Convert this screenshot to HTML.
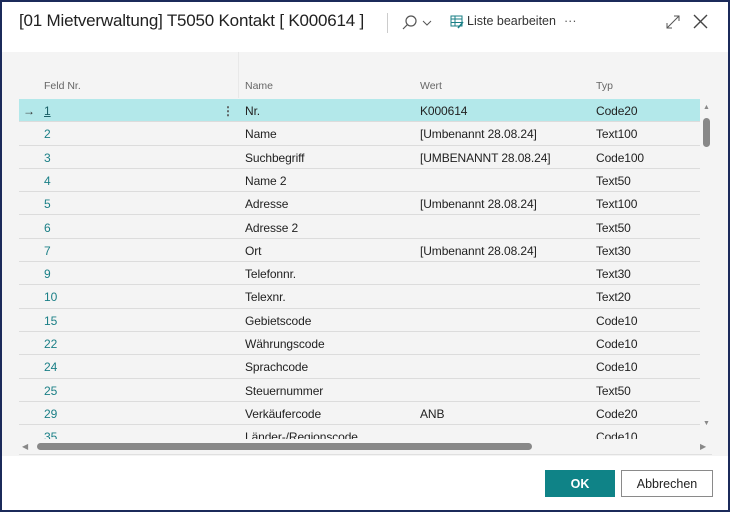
<!DOCTYPE html>
<html><head><meta charset="utf-8"><style>
*{margin:0;padding:0;box-sizing:border-box}
body{width:730px;height:512px;overflow:hidden;font-family:"Liberation Sans",sans-serif;background:#fff;position:relative}
.frame{position:absolute;left:0;top:0;width:730px;height:512px;border:2px solid #1b2a5a}
.title{position:absolute;left:19px;top:11px;font-size:17px;color:#212121;letter-spacing:-0.2px}
.sep{position:absolute;left:387px;top:13px;width:1px;height:20px;background:#ccc}
.tb{position:absolute;top:14px;font-size:12.5px;color:#333}
.panel{position:absolute;left:2px;top:52px;width:726px;height:404px;background:#f4f4f4}
.hdr{position:absolute;top:80px;font-size:10.5px;color:#666}
.row{position:absolute;left:19px;width:681px;height:23.3px;border-bottom:1px solid #dcdcdc;font-size:12px;color:#222;letter-spacing:-0.1px}
.row span{position:absolute;top:5px}
.sel{background:#b3e8ea}
.n{color:#1a7f86}
.btn{position:absolute;top:470px;height:27px;font-size:12.5px;display:flex;align-items:center;justify-content:center}
</style></head><body>
<div class="title">[01 Mietverwaltung] T5050 Kontakt [ K000614 ]</div>
<div class="sep"></div>
<svg style="position:absolute;left:401px;top:14px" width="34" height="18"><circle cx="10" cy="7" r="5" fill="none" stroke="#555" stroke-width="1.2"/><line x1="6.5" y1="10.5" x2="2" y2="15" stroke="#555" stroke-width="1.2"/><polyline points="22,7 26,11 30,7" fill="none" stroke="#555" stroke-width="1"/></svg>
<svg style="position:absolute;left:450px;top:15px" width="14" height="14"><rect x="1" y="1" width="11" height="10" fill="none" stroke="#1a7f86"/><line x1="1" y1="4" x2="12" y2="4" stroke="#1a7f86"/><line x1="1" y1="7.5" x2="12" y2="7.5" stroke="#1a7f86"/><line x1="5" y1="1" x2="5" y2="11" stroke="#1a7f86"/><line x1="8" y1="13" x2="13" y2="7" stroke="#1a7f86" stroke-width="1.5"/></svg>
<div class="tb" style="left:467px">Liste bearbeiten</div>
<div class="tb" style="left:564px;color:#555">···</div>
<svg style="position:absolute;left:665px;top:13px" width="44" height="18"><path d="M2 15 L14 3 M9 3 H14 V8 M2 10 V15 H7" fill="none" stroke="#555" stroke-width="1"/><path d="M29 2 L42 15 M42 2 L29 15" stroke="#444" stroke-width="1.4"/></svg>
<div class="panel"></div>
<div style="position:absolute;left:238px;top:52px;width:1px;height:46px;background:#e8e8e8"></div>
<div class="hdr" style="left:44px">Feld Nr.</div>
<div class="hdr" style="left:245px">Name</div>
<div class="hdr" style="left:420px">Wert</div>
<div class="hdr" style="left:596px">Typ</div>
<div style="position:absolute;left:19px;top:99px;width:681px;height:342px;overflow:hidden">
<div class="row sel" style="left:0;top:0"><span style="left:4px;color:#333">→</span><span class="n" style="left:25px;text-decoration:underline;color:#1a5f66">1</span><span style="left:203px;font-weight:bold;color:#555">⋮</span><span style="left:226px">Nr.</span><span style="left:401px">K000614</span><span style="left:577px">Code20</span></div>
<div class="row" style="left:0;top:23.3px"><span class="n" style="left:25px">2</span><span style="left:226px">Name</span><span style="left:401px">[Umbenannt 28.08.24]</span><span style="left:577px">Text100</span></div>
<div class="row" style="left:0;top:46.6px"><span class="n" style="left:25px">3</span><span style="left:226px">Suchbegriff</span><span style="left:401px">[UMBENANNT 28.08.24]</span><span style="left:577px">Code100</span></div>
<div class="row" style="left:0;top:69.9px"><span class="n" style="left:25px">4</span><span style="left:226px">Name 2</span><span style="left:577px">Text50</span></div>
<div class="row" style="left:0;top:93.2px"><span class="n" style="left:25px">5</span><span style="left:226px">Adresse</span><span style="left:401px">[Umbenannt 28.08.24]</span><span style="left:577px">Text100</span></div>
<div class="row" style="left:0;top:116.5px"><span class="n" style="left:25px">6</span><span style="left:226px">Adresse 2</span><span style="left:577px">Text50</span></div>
<div class="row" style="left:0;top:139.8px"><span class="n" style="left:25px">7</span><span style="left:226px">Ort</span><span style="left:401px">[Umbenannt 28.08.24]</span><span style="left:577px">Text30</span></div>
<div class="row" style="left:0;top:163.1px"><span class="n" style="left:25px">9</span><span style="left:226px">Telefonnr.</span><span style="left:577px">Text30</span></div>
<div class="row" style="left:0;top:186.4px"><span class="n" style="left:25px">10</span><span style="left:226px">Telexnr.</span><span style="left:577px">Text20</span></div>
<div class="row" style="left:0;top:209.7px"><span class="n" style="left:25px">15</span><span style="left:226px">Gebietscode</span><span style="left:577px">Code10</span></div>
<div class="row" style="left:0;top:233px"><span class="n" style="left:25px">22</span><span style="left:226px">Währungscode</span><span style="left:577px">Code10</span></div>
<div class="row" style="left:0;top:256.3px"><span class="n" style="left:25px">24</span><span style="left:226px">Sprachcode</span><span style="left:577px">Code10</span></div>
<div class="row" style="left:0;top:279.6px"><span class="n" style="left:25px">25</span><span style="left:226px">Steuernummer</span><span style="left:577px">Text50</span></div>
<div class="row" style="left:0;top:302.9px"><span class="n" style="left:25px">29</span><span style="left:226px">Verkäufercode</span><span style="left:401px">ANB</span><span style="left:577px">Code20</span></div>
<div class="row" style="left:0;top:326.2px;border:none"><span class="n" style="left:25px">35</span><span style="left:226px">Länder-/Regionscode</span><span style="left:577px">Code10</span></div>
</div>
<div style="position:absolute;left:19px;top:439px;width:693px;height:16px;background:#f4f4f4"></div>
<div style="position:absolute;left:703px;top:104px;font-size:7px;color:#888">▲</div>
<div style="position:absolute;left:703px;top:118px;width:7px;height:29px;background:#888;border-radius:4px"></div>
<div style="position:absolute;left:703px;top:420px;font-size:7px;color:#888">▼</div>
<div style="position:absolute;left:22px;top:442px;font-size:8px;color:#888">◀</div>
<div style="position:absolute;left:37px;top:443px;width:495px;height:7px;background:#888;border-radius:4px"></div>
<div style="position:absolute;left:700px;top:442px;font-size:8px;color:#888">▶</div>
<div style="position:absolute;left:19px;top:454px;width:693px;height:1px;background:#e0e0e0"></div>
<div class="btn" style="left:545px;width:70px;background:#0f8387;color:#fff;font-weight:bold">OK</div>
<div class="btn" style="left:621px;width:92px;border:1px solid #8a8a8a;background:#fff;color:#222">Abbrechen</div>
<div class="frame"></div>
</body></html>
